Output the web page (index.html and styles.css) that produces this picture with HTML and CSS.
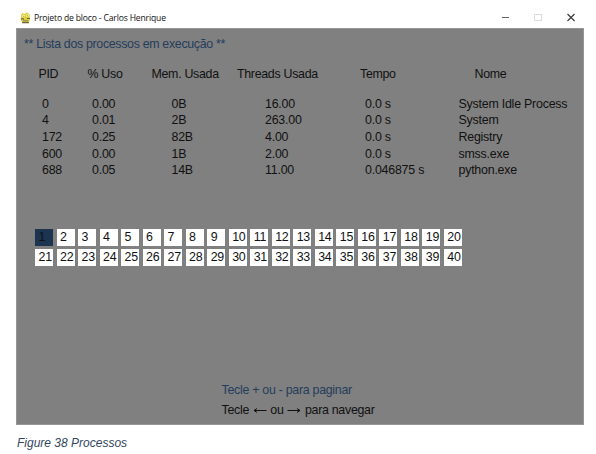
FILE: index.html
```html
<!DOCTYPE html>
<html lang="pt-BR">
<head>
<meta charset="utf-8">
<title>Projeto de bloco - Carlos Henrique</title>
<link rel="stylesheet" href="styles.css">
</head>
<body>
<figure class="figure">
  <div class="window">
    <header class="titlebar">
      <svg class="logo" viewBox="0 0 11 12">
        <path d="M1 3 2.5 1l2 1 2-1.5L9.500 2 10 7l-1.200 4H2.500L.8 8z" fill="#dccb3c"/>
        <path d="M1 6.800h3M7 6.500h3M2 10.700h7" stroke="#6f682c" stroke-width="1.200"/>
        <path d="M3 8.800h5" stroke="#8a8a70" stroke-width="1.200"/>
        <circle cx="3.600" cy="4" r="1.500" fill="#f9f39a"/><circle cx="7.500" cy="3.600" r="1.500" fill="#f9f39a"/>
        <circle cx="3.800" cy="4.200" r=".5" fill="#77702c"/><circle cx="7.400" cy="3.800" r=".5" fill="#77702c"/>
      </svg>
      <span class="title">Projeto de bloco - Carlos Henrique</span>
      <svg class="controls" viewBox="0 0 76 12">
        <path d="M0 5.500h7" stroke="#666" stroke-width="1"/>
        <rect x="32.500" y="2.500" width="7" height="6" fill="none" stroke="#ddd"/>
        <path d="M65.500 2l7 7M72.500 2l-7 7" stroke="#333" stroke-width="1.100"/>
      </svg>
    </header>
    <main class="screen">
      <h1 class="heading">** Lista dos processos em execução **</h1>
      <div class="row head"><span>PID</span><span>% Uso</span><span>Mem. Usada</span><span>Threads Usada</span><span>Tempo</span><span>Nome</span></div>
      <div class="rows">
        <div class="row"><span>0</span><span>0.00</span><span>0B</span><span>16.00</span><span>0.0 s</span><span>System Idle Process</span></div>
        <div class="row"><span>4</span><span>0.01</span><span>2B</span><span>263.00</span><span>0.0 s</span><span>System</span></div>
        <div class="row"><span>172</span><span>0.25</span><span>82B</span><span>4.00</span><span>0.0 s</span><span>Registry</span></div>
        <div class="row"><span>600</span><span>0.00</span><span>1B</span><span>2.00</span><span>0.0 s</span><span>smss.exe</span></div>
        <div class="row"><span>688</span><span>0.05</span><span>14B</span><span>11.00</span><span>0.046875 s</span><span>python.exe</span></div>
      </div>
      <nav class="pages">
        <b class="active">1</b><b>2</b><b>3</b><b>4</b><b>5</b><b>6</b><b>7</b><b>8</b><b>9</b><b>10</b><b>11</b><b>12</b><b>13</b><b>14</b><b>15</b><b>16</b><b>17</b><b>18</b><b>19</b><b>20</b>
        <b>21</b><b>22</b><b>23</b><b>24</b><b>25</b><b>26</b><b>27</b><b>28</b><b>29</b><b>30</b><b>31</b><b>32</b><b>33</b><b>34</b><b>35</b><b>36</b><b>37</b><b>38</b><b>39</b><b>40</b>
      </nav>
      <div class="hints">
        <p class="blue">Tecle + ou - para paginar</p>
        <p>Tecle <svg class="arrow" viewBox="0 0 14 8"><path d="M13.5 4.500H1M4 2.500 1 4.500l3 2"/></svg> ou <svg class="arrow" viewBox="0 0 14 8"><path d="M.5 4.500H13M10 2.500 13 4.500l-3 2"/></svg> para navegar</p>
      </div>
    </main>
  </div>
  <figcaption class="caption">Figure 38 Processos</figcaption>
</figure>
</body>
</html>
```
FILE: styles.css
```css
* { box-sizing: border-box; }
body {
  margin: 0;
  background: #fff;
  font: 12.4px/17px "Liberation Sans", Arial, sans-serif;
  letter-spacing: -0.22px;
  color: #111;
}
.figure { margin: 0; padding: 8px 0 0 16px; }
.window { width: 568px; }
.titlebar { display: flex; align-items: center; height: 20px; padding-left: 4px; }
.logo { width: 11px; height: 12px; }
.title {
  margin-left: 3px;
  font: 8.6px/20px "Open Sans", "Noto Sans", sans-serif;
  letter-spacing: -0.17px;
  color: #111;
  white-space: nowrap;
}
.controls { width: 76px; height: 12px; margin-left: auto; margin-right: 6px; }
.screen {
  height: 397px;
  padding-top: 7px;
  background: #808080;
  border: 1px solid #969696;
}
.heading {
  margin: 0 0 0 7px;
  font-size: 12.4px;
  font-weight: normal;
  line-height: 17px;
  letter-spacing: -0.32px;
  color: #253d5c;
}
.row {
  display: grid;
  grid-template-columns: 50px 79.5px 93.5px 100px 93.5px auto;
  padding-left: 25px;
  height: 16.7px;
  line-height: 16.7px;
  white-space: nowrap;
}
.head {
  grid-template-columns: 49px 64px 85.5px 123px 114.5px auto;
  padding-left: 21.5px;
  margin-top: 12.5px;
  letter-spacing: -0.3px;
}
.rows { margin-top: 13.5px; }
.pages {
  display: grid;
  grid-template-columns: repeat(20, 18px);
  grid-auto-rows: 17px;
  column-gap: 3.53px;
  row-gap: 3px;
  margin: 49.5px 0 0 18px;
}
.pages b {
  padding-left: 3.5px;
  background: #fff;
  font-weight: normal;
  line-height: 17px;
}
.pages .active { background: #1d3451; }
.hints { margin: 116px 0 0 204.5px; }
.hints p { margin: 0 0 3px; white-space: nowrap; letter-spacing: -0.28px; }
.hints .blue { color: #253d5c; }
.arrow { width: 14px; height: 8px; margin: 0 .5px; fill: none; stroke: #111; stroke-width: 1; }
.caption {
  margin: 10px 0 0 1px;
  font-size: 12px;
  font-style: italic;
  letter-spacing: 0;
  color: #34465f;
}
```
